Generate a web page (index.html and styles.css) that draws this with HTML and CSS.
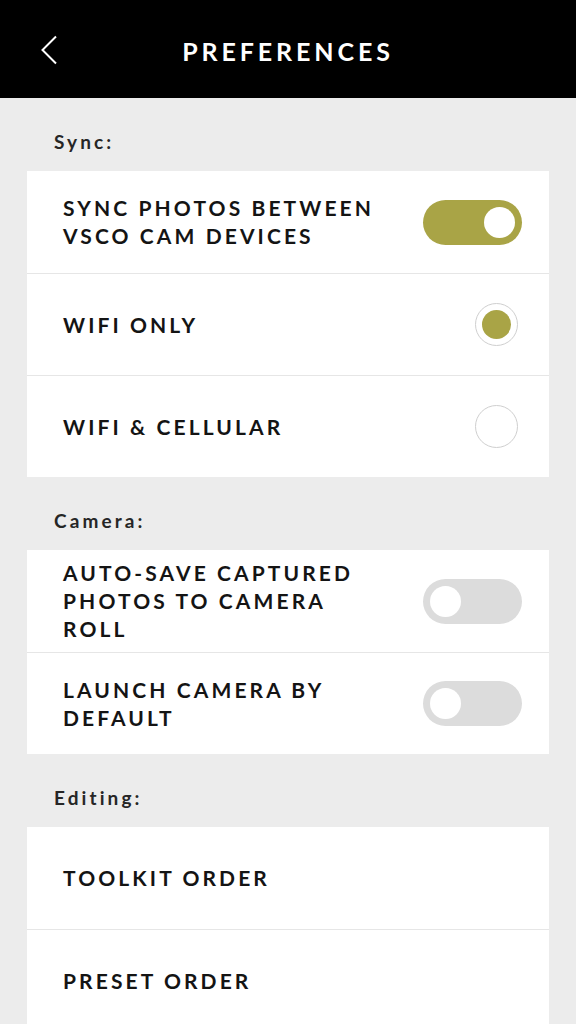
FILE: index.html
```html
<!DOCTYPE html>
<html>
<head>
<meta charset="utf-8">
<link rel="stylesheet" href="styles.css">
</head>
<body>
<header class="topbar">
  <span class="back">
    <svg width="18" height="30" viewBox="0 0 18 30"><path d="M16 1.5 L2.5 15 L16 28.5" fill="none" stroke="#fff" stroke-width="2"/></svg>
  </span>
  <h1 class="title">PREFERENCES</h1>
</header>

<div class="section-label">Sync:</div>
<div class="card">
  <div class="row">
    <div class="row-text">SYNC PHOTOS BETWEEN VSCO CAM DEVICES</div>
    <span class="toggle on"><span class="knob"></span></span>
  </div>
  <div class="row">
    <div class="row-text">WIFI ONLY</div>
    <span class="radio checked"><span class="dot"></span></span>
  </div>
  <div class="row">
    <div class="row-text">WIFI &amp; CELLULAR</div>
    <span class="radio"></span>
  </div>
</div>

<div class="section-label">Camera:</div>
<div class="card">
  <div class="row">
    <div class="row-text">AUTO-SAVE CAPTURED PHOTOS TO CAMERA ROLL</div>
    <span class="toggle"><span class="knob"></span></span>
  </div>
  <div class="row">
    <div class="row-text">LAUNCH CAMERA BY DEFAULT</div>
    <span class="toggle"><span class="knob"></span></span>
  </div>
</div>

<div class="section-label">Editing:</div>
<div class="card">
  <div class="row">
    <div class="row-text">TOOLKIT ORDER</div>
  </div>
  <div class="row">
    <div class="row-text">PRESET ORDER</div>
  </div>
</div>
</body>
</html>
```

FILE: styles.css
```css
* { box-sizing: border-box; }
html, body {
  margin: 0;
  padding: 0;
  background: #ececec;
  font-family: Lato, "Open Sans", sans-serif;
}
body {
  width: 576px;
  height: 1024px;
  overflow: hidden;
}
.topbar {
  height: 98px;
  background: #000;
  display: flex;
  align-items: center;
  justify-content: center;
  position: relative;
}
.back {
  position: absolute;
  left: 40px;
  top: 35px;
  width: 18px;
  height: 30px;
  display: block;
}
.back svg { display: block; }
.title {
  margin: 0;
  color: #fff;
  font-size: 25px;
  font-weight: 700;
  letter-spacing: 3.9px;
  padding-top: 3px;
}
.section-label {
  height: 73px;
  padding-left: 54px;
  padding-top: 33px;
  font-size: 19px;
  font-weight: 700;
  letter-spacing: 3.1px;
  color: #262626;
  line-height: 22px;
}
.card {
  margin: 0 27px;
  background: #fff;
}
.row {
  height: 102px;
  display: flex;
  align-items: center;
  justify-content: space-between;
  padding: 0 27px 0 36px;
  border-top: 1px solid #e6e6e6;
}
.row:first-child { border-top: 0; height: 102px; }
.row-text {
  width: 330px;
  font-size: 21px;
  font-weight: 700;
  letter-spacing: 3.1px;
  line-height: 28px;
  color: #141414;
}
.toggle {
  width: 99px;
  height: 45px;
  border-radius: 23px;
  background: #dcdcdc;
  display: flex;
  align-items: center;
  padding: 0 7px;
}
.toggle .knob {
  width: 31px;
  height: 31px;
  border-radius: 50%;
  background: #fff;
}
.toggle.on {
  background: #a9a446;
  justify-content: flex-end;
}
.radio {
  width: 43px;
  height: 43px;
  border-radius: 50%;
  border: 1.5px solid #cfcfcf;
  margin-right: 4px;
  display: flex;
  align-items: center;
  justify-content: center;
}
.radio .dot {
  width: 29px;
  height: 29px;
  border-radius: 50%;
  background: #a9a446;
}
```
